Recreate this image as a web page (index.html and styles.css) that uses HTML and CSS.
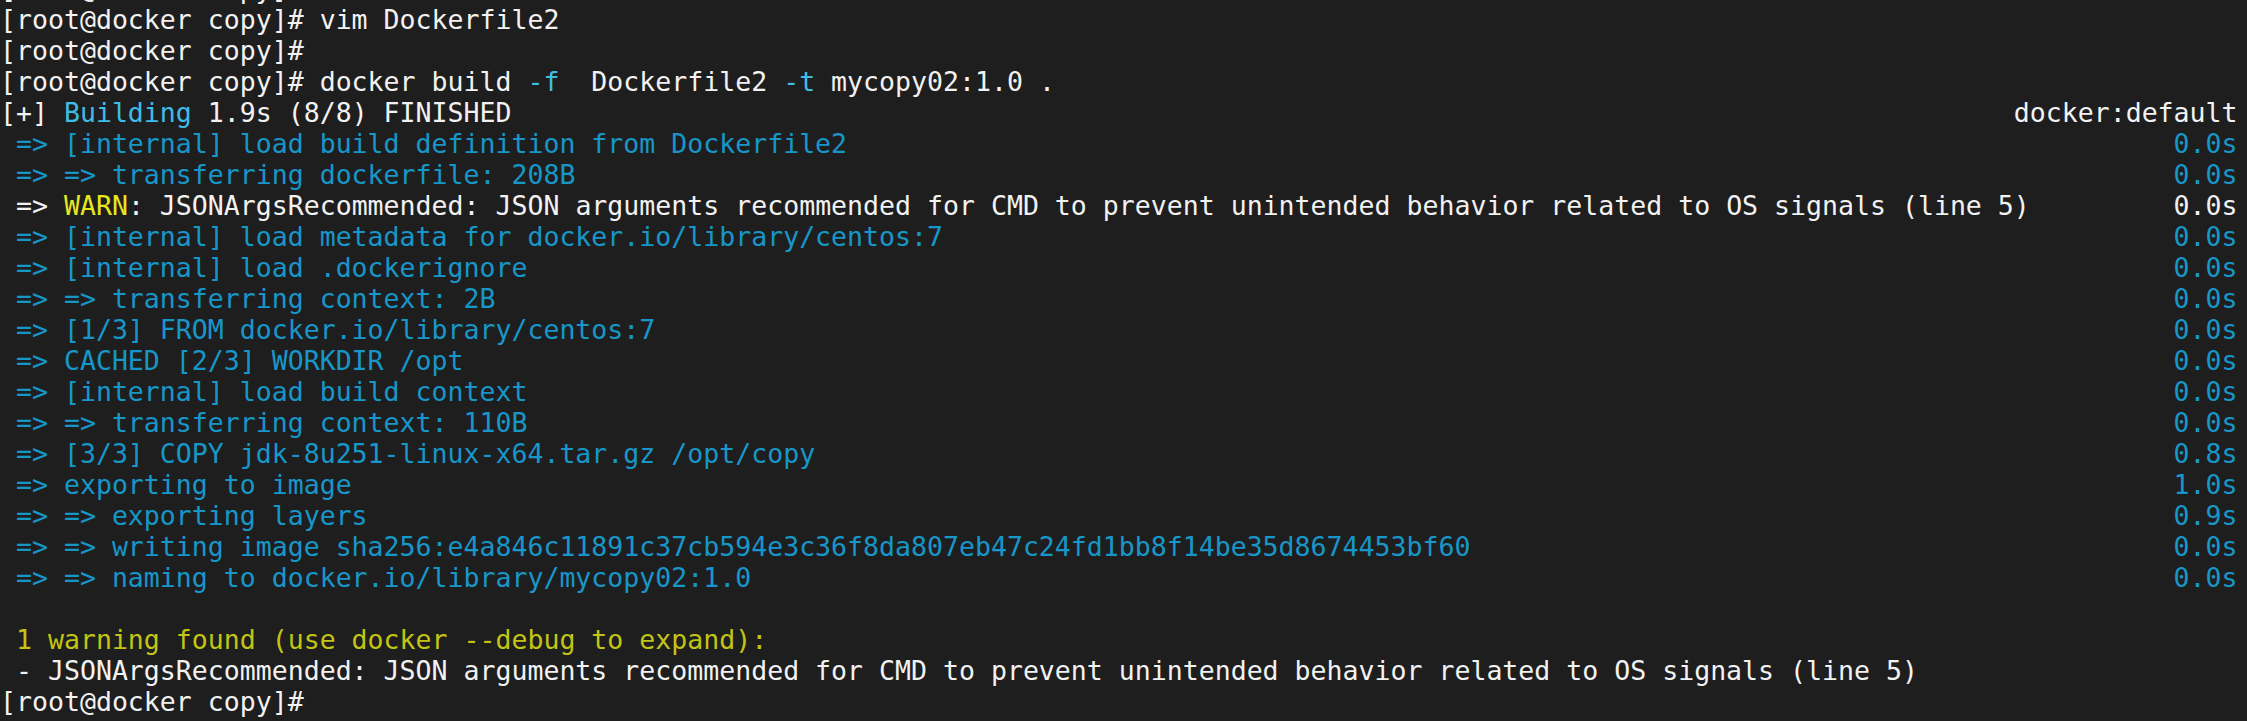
FILE: index.html
```html
<!DOCTYPE html>
<html lang="en">
<head>
<meta charset="utf-8">
<title>terminal</title>
<link rel="stylesheet" href="styles.css">
</head>
<body>
<div class="term">
  <div class="line">[root@docker copy]#</div>
  <div class="line">[root@docker copy]# vim Dockerfile2</div>
  <div class="line">[root@docker copy]#</div>
  <div class="line">[root@docker copy]# docker build <span class="flag">-f</span>  Dockerfile2 <span class="flag">-t</span> mycopy02:1.0 .</div>
  <div class="line row"><span>[+] <span class="cyan">Building</span> 1.9s (8/8) FINISHED</span><span>docker:default</span></div>
  <div class="line row blue"><span> =&gt; [internal] load build definition from Dockerfile2</span><span>0.0s</span></div>
  <div class="line row blue"><span> =&gt; =&gt; transferring dockerfile: 208B</span><span>0.0s</span></div>
  <div class="line row"><span> =&gt; <span class="warn">WARN</span>: JSONArgsRecommended: JSON arguments recommended for CMD to prevent unintended behavior related to OS signals (line 5)</span><span>0.0s</span></div>
  <div class="line row blue"><span> =&gt; [internal] load metadata for docker.io/library/centos:7</span><span>0.0s</span></div>
  <div class="line row blue"><span> =&gt; [internal] load .dockerignore</span><span>0.0s</span></div>
  <div class="line row blue"><span> =&gt; =&gt; transferring context: 2B</span><span>0.0s</span></div>
  <div class="line row blue"><span> =&gt; [1/3] FROM docker.io/library/centos:7</span><span>0.0s</span></div>
  <div class="line row blue"><span> =&gt; CACHED [2/3] WORKDIR /opt</span><span>0.0s</span></div>
  <div class="line row blue"><span> =&gt; [internal] load build context</span><span>0.0s</span></div>
  <div class="line row blue"><span> =&gt; =&gt; transferring context: 110B</span><span>0.0s</span></div>
  <div class="line row blue"><span> =&gt; [3/3] COPY jdk-8u251-linux-x64.tar.gz /opt/copy</span><span>0.8s</span></div>
  <div class="line row blue"><span> =&gt; exporting to image</span><span>1.0s</span></div>
  <div class="line row blue"><span> =&gt; =&gt; exporting layers</span><span>0.9s</span></div>
  <div class="line row blue"><span> =&gt; =&gt; writing image sha256:e4a846c11891c37cb594e3c36f8da807eb47c24fd1bb8f14be35d8674453bf60</span><span>0.0s</span></div>
  <div class="line row blue"><span> =&gt; =&gt; naming to docker.io/library/mycopy02:1.0</span><span>0.0s</span></div>
  <div class="line"> </div>
  <div class="line olive"> 1 warning found (use docker --debug to expand):</div>
  <div class="line"> - JSONArgsRecommended: JSON arguments recommended for CMD to prevent unintended behavior related to OS signals (line 5)</div>
  <div class="line">[root@docker copy]#</div>
  <div class="line">[root@docker copy]#</div>
</div>
</body>
</html>
```

FILE: styles.css
```css
html, body {
  margin: 0;
  padding: 0;
  background: #1e1e1e;
  height: 100%;
  overflow: hidden;
}

.term {
  font-family: "DejaVu Sans Mono", monospace;
  font-size: 26.55px;
  line-height: 31px;
  color: #f2f2f2;
  width: 140ch;
  margin-top: -27px;
}

.line {
  white-space: pre;
  height: 31px;
}

.row {
  display: flex;
  justify-content: space-between;
}

.blue {
  color: #1797c9;
}

.cyan,
.flag {
  color: #3fbde6;
}

.warn {
  color: #e6e61e;
}

.olive {
  color: #c4c414;
}
```
